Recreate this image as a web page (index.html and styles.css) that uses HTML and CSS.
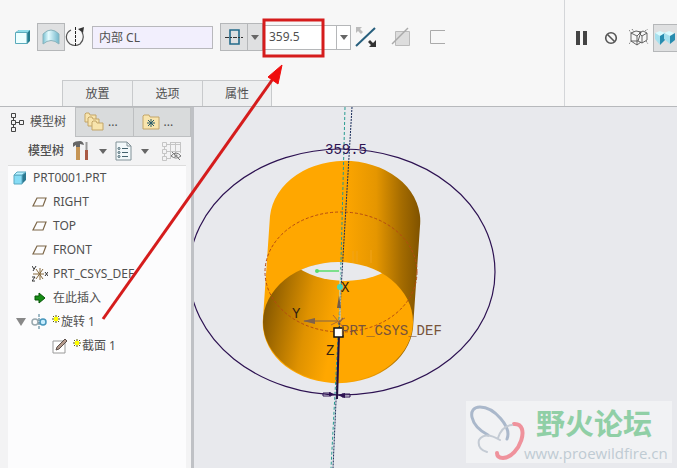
FILE: index.html
```html
<!DOCTYPE html>
<html lang="zh-CN">
<head>
<meta charset="utf-8">
<title>PRT0001</title>
<link rel="stylesheet" href="styles.css">
</head>
<body>
<header class="ribbon">
  <div class="ribbon-main">
    <div class="tools">
      <button class="tool cube-tool" aria-label="实体"><svg width="16" height="16" viewBox="0 0 16 16"><path d="M1 3 4 1h11v11l-3 3H1z" fill="#247b8c"/><path d="M1 3 4 1h11l-3 3H1z" fill="#8edce8"/><path d="M.5 3.5h11.500v11H.5z" fill="#edffff" stroke="#5aaabb"/></svg></button>
      <button class="tool pressed surface-tool" aria-label="曲面"><svg width="18" height="16" viewBox="0 0 18 16"><defs><linearGradient id="sf"><stop stop-color="#79c1d3"/><stop offset=".35" stop-color="#e5fcff"/><stop offset="1" stop-color="#70b6ca"/></linearGradient></defs><path d="M1 15V5Q9-3 17 5v10Q9 8 1 15z" fill="url(#sf)" stroke="#8ab3bc"/></svg></button>
      <button class="tool axis-tool" aria-label="旋转轴"><svg width="20" height="22" viewBox="0 0 20 22" fill="none" stroke="#555"><path d="M6 4C0 7 0 14 5 18q5 3 10 0c4-4 4-8 2-12" stroke-width="1.200"/><path d="M10.500 1v20" stroke="#222" stroke-dasharray="3 1"/><path d="m13 3 6-2-1 6z" fill="#333" stroke="none"/></svg></button>
      <input class="collector" aria-label="轴收集器" value="内部 CL">
      <div class="split">
        <button class="tool pressed" aria-label="对称角度"><svg width="20" height="18" viewBox="0 0 20 18" fill="none"><path d="M6 2h9v14H6z" stroke="#246b8b" stroke-width="1.600"/><path d="M1 9.500h18" stroke="#333" stroke-dasharray="4 1 2 1"/></svg></button>
        <button class="drop pressed" aria-label="角度选项"><i class="caret"></i></button>
      </div>
      <div class="combo">
        <input class="angle" aria-label="角度" value="359.5">
        <button class="drop" aria-label="最近的角度"><i class="caret"></i></button>
      </div>
      <button class="tool flip-tool" aria-label="反向"><svg width="22" height="22" viewBox="0 0 22 22"><path d="M1 20 20 2" stroke="#275f7d" stroke-width="2"/><path d="M1 1h6L5 3l3 3-2 2-3-3-2 2z" fill="#bbb"/><path d="M21 21h-7l2-2-3-3 2-2 3 3 3-3z" fill="#333"/></svg></button>
      <button class="tool cut-tool" aria-label="移除材料"><svg width="20" height="20" viewBox="0 0 20 20"><path d="M4.500 4.500h14v14h-14z" fill="#ddd" stroke="#bbb"/><path d="M1 17 17 1" stroke="#aaa" stroke-width="1.500"/></svg></button>
      <button class="tool thin-tool" aria-label="加厚草绘"><svg width="16" height="16" viewBox="0 0 16 16"><path d="M16 1.500H1.500v13H16" fill="none" stroke="#aaa"/></svg></button>
    </div>
    <nav class="ribbon-tabs">
      <button>放置</button><button>选项</button><button>属性</button>
    </nav>
  </div>
  <div class="actions">
    <button class="tool pause" aria-label="暂停"><svg width="13" height="14" viewBox="0 0 13 14"><path d="M1 0h4v14H1zM8 0h4v14H8z" fill="#444"/></svg></button>
    <button class="tool none" aria-label="无预览"><svg width="14" height="14" viewBox="0 0 14 14" fill="none" stroke="#555" stroke-width="1.600"><circle cx="7" cy="7" r="5.300"/><path d="m3.500 3.500 7 7"/></svg></button>
    <button class="tool wires" aria-label="分离"><svg width="20" height="18" viewBox="0 0 20 18" fill="none" stroke="#555" stroke-width=".9"><path d="m2 4 6 3 4-4M8 7v9l4-3M2 4v8l6 4M2 4l5-2 5 1M12 3 9 12l-7 0M13 7l5-3-4-2-4 2zM13 7v7l5-3V4M9 12l4 2"/><path d="m3 0 2 3M0 15l2-3M17 12l2 3M0 1l2 3M16 2l3-2" stroke-dasharray="1 1"/></svg></button>
    <button class="tool pressed attached" aria-label="连接"><svg width="26" height="16" viewBox="0 0 26 16"><path d="m1 3 5-2 5 2-5 3z" fill="#d9fbff"/><path d="m1 3 5 3v9L1 9z" fill="#a5e0ee"/><path d="m6 6 5-3v7l-5 5z" fill="#278caf"/><path d="m10 3 5-2 5 2-4 3z" fill="#d9fbff"/><path d="m10 3 6 3v8l-6-5z" fill="#a5e0ee"/><path d="m16 6 5-3v7l-5 4z" fill="#278caf"/></svg></button>
  </div>
</header>
<main class="work">
  <aside class="panel">
    <div class="panel-tabs">
      <button class="current"><svg width="14" height="20" viewBox="0 0 14 20" fill="none" stroke="#444"><path d="M1.500 1.500h4v4h-4zM1.500 8.500h4v4h-4zM1.500 15.500h4v4h-4zM9.500 8.500h4v4h-4zM3.500 5.500v3m0 4v3m2-5h4"/></svg>模型树</button>
      <button aria-label="文件夹浏览器"><svg width="20" height="20" viewBox="0 0 20 20" fill="#f8e4ad" stroke="#c3a568"><path d="M1 10V2l1-1h3l1 2h6v7z"/><path d="M4 14V6l1-1h3l1 2h6v7z"/><path d="M8 18v-8l1-1h3l1 2h6v7z"/></svg>...</button>
      <button aria-label="收藏夹"><svg width="18" height="16" viewBox="0 0 18 16"><path d="M1 15V2l1-1h5l1 2h9v12z" fill="#f8e4ad" stroke="#c3a568"/><path d="M9 5v8M5 9h8M6 6l6 6m0-6-6 6" stroke="#265a69"/></svg>...</button>
    </div>
    <div class="panel-tools">
      <h2>模型树</h2>
      <button aria-label="设置"><svg width="18" height="20" viewBox="0 0 18 20"><path d="M1 6V2q2-2 7-2 3 0 4 4l-4-1v3H4V4z" fill="#666"/><path d="M4 6h4v13H4z" fill="#c69555"/><path d="M14.500 1v9" stroke="#999" stroke-width="2"/><path d="M13 9h3v10h-3z" fill="#a95a45"/></svg></button><i class="caret"></i>
      <button aria-label="显示"><svg width="17" height="20" viewBox="0 0 17 20" fill="none"><path d="M1 1h11l4 4v14H1z" fill="#f2f8fa" stroke="#829298"/><path d="M12 1v4h4" stroke="#829298"/><path d="M7 7.500h6M7 11.500h6M7 15.500h6" stroke="#44636e"/><circle cx="4" cy="7.500" r="1" stroke="#44636e"/><circle cx="4" cy="11.500" r="1" stroke="#44636e"/><circle cx="4" cy="15.500" r="1" stroke="#44636e"/></svg></button><i class="caret"></i>
      <button class="hide-items" aria-label="隐藏项"><svg width="21" height="20" viewBox="0 0 21 20" fill="none" stroke="#c5c5c5"><path d="M1.500 1.500h4v4h-4zM1.500 8.500h4v4h-4zM1.500 15.500h4v4h-4zM3.500 5v3m0 4v3M5 3.500h14M5 10.500h14M9.500 1v17M14.500 1v12M19.500 1v11M9 1.500h10M5 17.500h5"/><path d="M10 15q5-6 10 0-5 4-10 0zm1-4 8 8" stroke="#777"/><circle cx="15" cy="15" r="1.500" fill="#777"/></svg></button>
    </div>
    <ul class="tree">
      <li class="root"><svg width="14" height="14" viewBox="0 0 14 14"><path d="M1 4 4 1h9v8l-4 4H1z" fill="#2c7890"/><path d="M1 4h8v9H1z" fill="#86dcf5" stroke="#5aa9c2"/><path d="m1 4 3-3h9L9 4z" fill="#bdf3ff" stroke="#5aa9c2"/></svg>PRT0001.PRT</li>
      <li><svg width="16" height="10" viewBox="0 0 16 10"><path d="M5 1h9l-3 8H1z" fill="none" stroke="#7d6749" stroke-width="1.200"/></svg>RIGHT</li>
      <li><svg width="16" height="10" viewBox="0 0 16 10"><path d="M5 1h9l-3 8H1z" fill="none" stroke="#7d6749" stroke-width="1.200"/></svg>TOP</li>
      <li><svg width="16" height="10" viewBox="0 0 16 10"><path d="M5 1h9l-3 8H1z" fill="none" stroke="#7d6749" stroke-width="1.200"/></svg>FRONT</li>
      <li><svg width="16" height="18" viewBox="0 0 16 18" fill="none" stroke="#876a3d"><path d="M1 9h11M8 3v12M4 4l7 10m0-10L4 14"/><path d="m0 1 2 3m2-3L1 6m-1 6h3l-3 4h3m10-9 3 4m0-4-3 4" stroke="#333"/></svg>PRT_CSYS_DEF</li>
      <li><svg width="16" height="12" viewBox="0 0 16 12"><path d="M3 4h4V1l6 5-6 5V8H3z" fill="#168c16" stroke="#075607"/></svg>在此插入</li>
      <li class="feature"><i class="expander"></i><svg width="16" height="16" viewBox="0 0 16 16" fill="none"><circle cx="4" cy="8" r="3" stroke="#9aa8ae" stroke-width="1.500"/><circle cx="12" cy="8" r="3" fill="#c6edff" stroke="#4796bc" stroke-width="1.500"/><path d="M8 0v16" stroke="#40768d" stroke-dasharray="3 1"/></svg><svg class="star" width="8" height="8" viewBox="0 0 8 8"><path d="M4 0v8M0 4h8M1 1l6 6m0-6L1 7" stroke="#5d5d00"/><path d="M2 2h4v4H2z" fill="#ff0"/></svg>旋转 1</li>
      <li class="child"><svg width="16" height="16" viewBox="0 0 16 16"><path d="M1 3h12v12H1z" fill="#fff" stroke="#999"/><path d="m4 12 1-3 8-8 2 2-8 8z" fill="#b49a8c" stroke="#5c504b"/></svg><svg class="star" width="8" height="8" viewBox="0 0 8 8"><path d="M4 0v8M0 4h8M1 1l6 6m0-6L1 7" stroke="#5d5d00"/><path d="M2 2h4v4H2z" fill="#ff0"/></svg>截面 1</li>
    </ul>
  </aside>
  <section class="canvas" aria-label="图形窗口">
    <svg class="model" viewBox="194 107 483 361" preserveAspectRatio="xMinYMin slice">
      <defs>
        <linearGradient id="outer" gradientUnits="userSpaceOnUse" x1="264" y1="0" x2="420" y2="0"><stop stop-color="#ffa700"/><stop offset=".5" stop-color="#ffa700"/><stop offset=".72" stop-color="#e59600"/><stop offset=".88" stop-color="#a56c00"/><stop offset="1" stop-color="#805300"/></linearGradient>
        <linearGradient id="inner" gradientUnits="userSpaceOnUse" x1="263" y1="318" x2="334" y2="332"><stop stop-color="#875800"/><stop offset=".25" stop-color="#ac7100"/><stop offset=".6" stop-color="#df9200"/><stop offset="1" stop-color="#ffa700"/></linearGradient>
        <clipPath id="front"><ellipse cx="338" cy="322" rx="75" ry="60"/></clipPath>
      </defs>
      <path d="M270 216A75 60 0 0 1 420 226L413 328A75 60 0 0 1 263 318z" fill="url(#outer)"/>
      <ellipse cx="338" cy="322" rx="75" ry="60" fill="url(#inner)"/>
      <ellipse cx="345" cy="221" rx="75" ry="60" fill="#e8e9ed" clip-path="url(#front)"/>
      <ellipse cx="341" cy="272" rx="76" ry="60" fill="none" stroke="#b54b12" stroke-dasharray="3 2"/>
      <ellipse cx="342" cy="272" rx="153" ry="123" fill="none" stroke="#2d1252" stroke-width="1.200"/>
      <path d="M345 107 340 300 331 468" fill="none" stroke="#279c91" stroke-dasharray="3 2"/>
      <path d="M352 107 341 290 333 468" fill="none" stroke="#172b59" stroke-dasharray="2 1"/>
      <path d="M316 271h23" stroke="#59dc6b" stroke-width="1.500"/><circle cx="317" cy="271" r="2" fill="#59dc6b"/>
      <path d="M340 269v52" stroke="#d9ece1"/><circle cx="340" cy="287" r="3" fill="#45d5bd"/>
      <path d="M304 321h34m0 3 5-6" stroke="#80624a" stroke-width="1.200"/><path d="m303 321 12-3v6z" fill="#80624a"/>
      <path d="m339 295-2 13h4z" fill="#705b49"/>
      <path d="m333 315 10 12m2-9-14 7" stroke="#b06b31"/>
      <path d="M353 251v12m4-12v12m14-13v13" stroke="#f0a31a"/>
      <path d="m339 333-2 66" stroke="#210f40" stroke-width="2"/>
      <path d="M323 393h8v3h-8zm19 1h8v3h-8z" fill="none" stroke="#2d1252"/><path d="m329 392 8 3 8-2v5l-8-3-8 1z" fill="#2d1252"/>
      <path d="M334 328h9v9h-9z" fill="#fff" stroke="#111" stroke-width="1.500"/>
      <g class="draft"><text x="325" y="154" fill="#2d1252">359.5</text><text x="341" y="335" fill="#77533b">PRT_CSYS_DEF</text><text x="341" y="292" fill="#342211">X</text><text x="292" y="318" fill="#342211">Y</text><text x="326" y="355" fill="#342211">Z</text></g>
    </svg>
    <div class="watermark">
      <svg width="60" height="58" viewBox="0 0 60 58" fill="none"><g stroke-linecap="round"><path d="M41 36C46 24 28 4 14 4 1 4 3 22 22 32" stroke="#aab8cb" stroke-width="3"/><path d="M48 21C65 20 54 54 37 55q-6 0-6-5" stroke="#ef929c" stroke-width="4"/><path d="M34 37q-15-9-21 0-2 9 8 12M32 35q4-12 14-13" stroke="#c4cbd4" stroke-width="2"/></g></svg>
      <div class="watermark-text"><strong>野火论坛</strong><span>www.proewildfire.cn</span></div>
    </div>
  </section>
</main>
<svg class="callout" width="340" height="340" viewBox="0 0 340 340" aria-hidden="true"><path d="M264 20h59v36h-59z" fill="none" stroke="#d51c1c" stroke-width="3"/><path d="M103 319 275 76" stroke="#d51c1c" stroke-width="3"/><path d="m282 65-4 19-10-7z" fill="#f00d0d" stroke="#f00d0d"/></svg>
</body>
</html>
```
FILE: styles.css
```css
* { box-sizing: border-box; }
body {
  margin: 0;
  min-height: 100vh;
  display: flex;
  flex-direction: column;
  position: relative;
  overflow-x: hidden;
  background: #f7f7f7;
  color: #505050;
  font: 12px/16px "Noto Sans", "Noto Sans CJK SC", sans-serif;
}
button, input { font: inherit; color: inherit; margin: 0; border-radius: 0; }
button { padding: 0; border: 0; background: none; }
svg { flex: none; display: block; }

.ribbon { display: flex; border-bottom: 1px solid #b7b9bc; }
.ribbon-main { flex: 1; min-width: 0; }
.tools { display: flex; align-items: center; height: 80px; padding: 0 0 6px 15px; }
.tool { display: flex; align-items: center; justify-content: center; flex: none; }
.pressed { width: 28px; height: 28px; background: #dfe0e1; border: 1px solid #b5b7b9; }
.surface-tool { margin-left: 6px; }
.collector { width: 121px; height: 23px; margin: 0 7px; padding: 0 6px; background: #f2effd; border: 1px solid #b8b8bc; }
.split, .combo { display: flex; }
.drop { width: 15px; display: grid; place-items: center; border: 1px solid #b5b7b9; }
.drop.pressed { width: 15px; border-left: 0; }
.caret { border: 4px solid transparent; border-top: 5px solid #666; border-bottom: 0; }
.combo { height: 25px; margin-left: 1px; }
.angle { width: 72px; padding: 0 4px; background: #fff; border: 1px solid #b5b7b9; border-right: 0; }
.combo .drop { background: #fff; }
.flip-tool { margin-left: 4px; }
.cut-tool { margin-left: 14px; }
.thin-tool { margin-left: 18px; }
.ribbon-tabs { display: flex; padding-left: 62px; }
.ribbon-tabs button { width: 70px; height: 26px; background: #eeeff0; border: 1px solid #c8cacc; border-width: 1px 0 0 1px; }
.ribbon-tabs button:last-child { border-right-width: 1px; }
.actions { width: 113px; display: flex; align-items: center; padding: 0 0 30px 10px; border-left: 1px solid #d4d6d9; overflow: hidden; }
.none { margin-left: 16px; }
.wires { margin-left: 11px; }
.attached { margin-left: 4px; }

.work { flex: 1; display: flex; }
.panel { width: 194px; flex: none; display: flex; flex-direction: column; background: #f3f3f4; border-right: 3px solid #bfc1c5; }
.panel-tabs { display: flex; height: 30px; }
.panel-tabs button { flex: 1; display: flex; align-items: center; gap: 4px; padding-left: 8px; background: #d9dbdc; border: 1px solid #bdbfc1; border-left-width: 0; }
.panel-tabs .current { flex: none; width: 76px; gap: 6px; padding-left: 10px; background: #f3f3f4; border-width: 0 1px 0 0; }
.panel-tools { display: flex; align-items: center; gap: 8px; height: 28px; padding-left: 28px; }
.panel-tools h2 { margin: 0; font-size: 12px; font-weight: 500; }
.panel-tools .caret { margin-left: 1px; }
.hide-items { margin-left: 4px; }
.tree { list-style: none; margin: 0 5px 0 8px; padding: 0 0 8px; flex: 1; background: #fcfcfd; border-top: 1px solid #ddd; }
.tree li { display: flex; align-items: center; gap: 5px; height: 24px; padding-left: 24px; white-space: nowrap; }
.tree .root { gap: 6px; padding-left: 5px; }
.tree .feature { padding-left: 8px; }
.tree .child { padding-left: 44px; }
.tree .star { margin: 0 -4px 6px 0; }
.expander { border: 5px solid transparent; border-top: 8px solid #888; border-bottom: 0; }

.canvas { flex: 1; min-width: 0; position: relative; overflow: hidden; background: #e8e9ed; }
.model { position: absolute; width: 100%; height: 100%; }
.draft { font: 14px "Liberation Mono", monospace; }
.watermark { position: absolute; right: 5px; bottom: 5px; display: flex; align-items: center; width: 206px; height: 62px; background: #f1f2f4; }
.watermark-text { display: flex; flex-direction: column; margin-left: -2px; }
.watermark strong { margin-left: 12px; color: #90cfa6; font: 700 29px/42px "Noto Sans CJK SC", sans-serif; }
.watermark span { color: #bfcbd3; font: 15px/20px "Open Sans", sans-serif; }
.callout { position: absolute; left: 0; top: 0; pointer-events: none; }
```
